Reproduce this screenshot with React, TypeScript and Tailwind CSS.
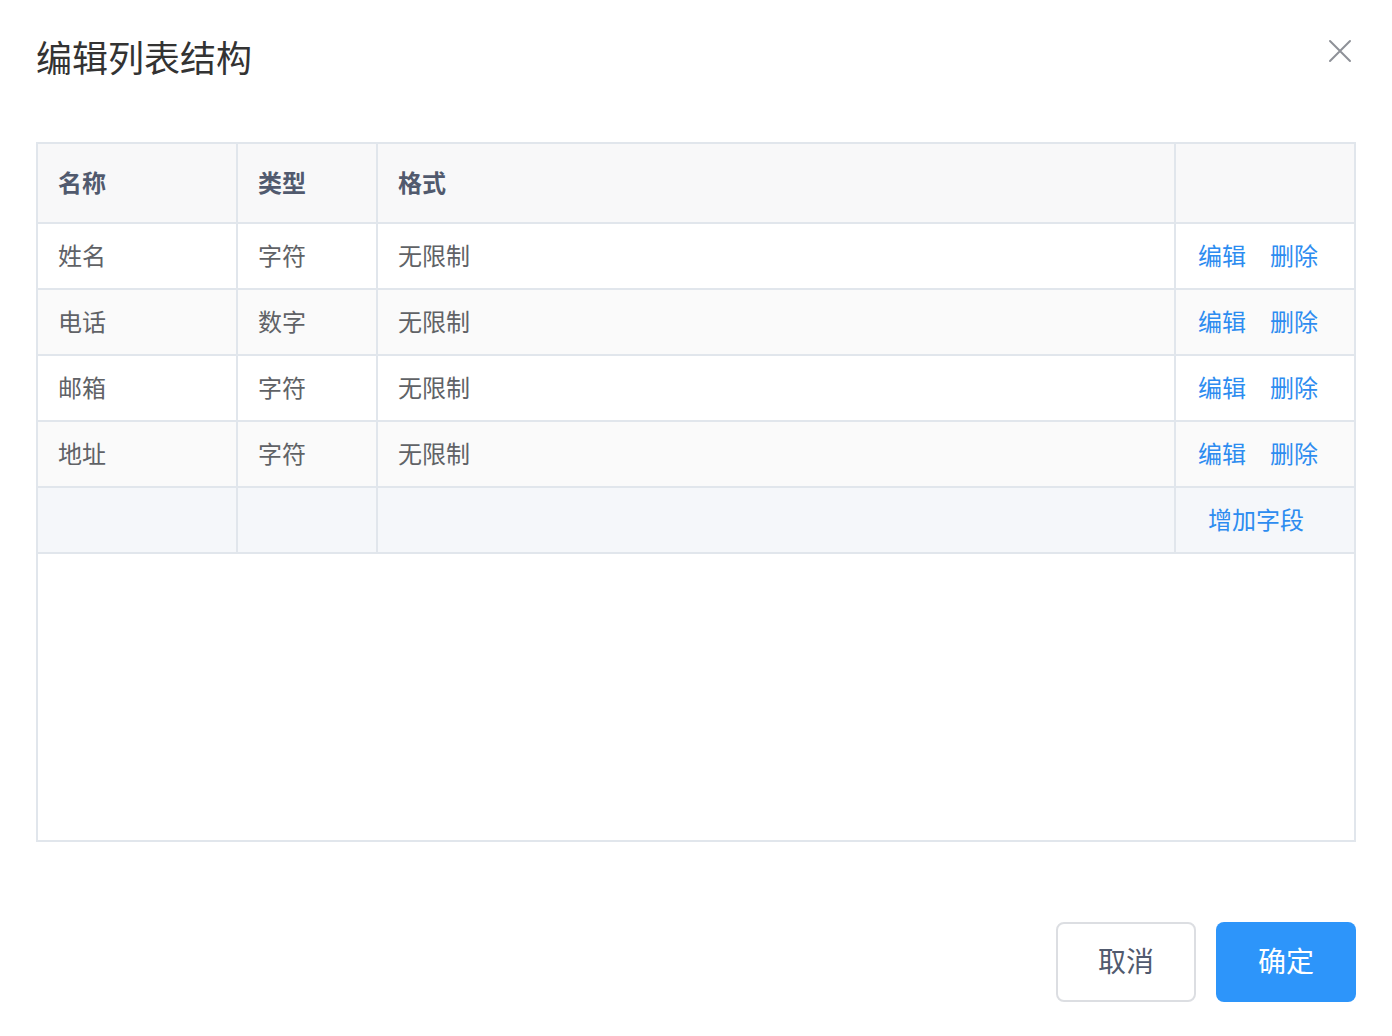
import React from "react";

type Field = {
  name: string;
  type: string;
  format: string;
};

const FIELDS: Field[] = [
  { name: "姓名", type: "字符", format: "无限制" },
  { name: "电话", type: "数字", format: "无限制" },
  { name: "邮箱", type: "字符", format: "无限制" },
  { name: "地址", type: "字符", format: "无限制" },
];

const cell = "flex items-center pl-5 pt-[2px] border-r-2 border-b-2 border-[#e1e6ec]";
const lastCell = "flex items-center justify-center pt-[2px] border-b-2 border-[#e1e6ec]";

const CloseIcon = () => (
  <svg width="24" height="24" viewBox="0 0 24 24" fill="none">
    <path d="M2 2L22 22M22 2L2 22" stroke="#8e9198" strokeWidth="2" strokeLinecap="round" />
  </svg>
);

export default function App() {
  return (
    <div
      className="w-[1392px] h-[1036px] bg-white px-9 pt-[33px]"
      style={{ fontFamily: '"Liberation Sans", "Noto Sans CJK SC", sans-serif' }}
    >
      {/* dialog header */}
      <div className="flex items-start justify-between">
        <h2 className="text-[36px] leading-[54px] text-[#333333]">编辑列表结构</h2>
        <button className="mt-[6px] mr-[4px]">
          <CloseIcon />
        </button>
      </div>

      {/* field table */}
      <div className="mt-[55px] h-[700px] border-2 border-[#e1e6ec]">
        <div className="grid grid-cols-[200px_140px_798px_1fr]">
          <div className={`${cell} h-[80px] bg-[#f8f8f9] text-[24px] font-semibold text-[#515a6e]`}>名称</div>
          <div className={`${cell} h-[80px] bg-[#f8f8f9] text-[24px] font-semibold text-[#515a6e]`}>类型</div>
          <div className={`${cell} h-[80px] bg-[#f8f8f9] text-[24px] font-semibold text-[#515a6e]`}>格式</div>
          <div className={`${lastCell} h-[80px] bg-[#f8f8f9]`}></div>

          {FIELDS.map((f, i) => {
            const bg = i % 2 === 1 ? "bg-[#fafafa]" : "bg-white";
            return (
              <React.Fragment key={f.name}>
                <div className={`${cell} ${bg} h-[66px] text-[24px] text-[#606266]`}>{f.name}</div>
                <div className={`${cell} ${bg} h-[66px] text-[24px] text-[#606266]`}>{f.type}</div>
                <div className={`${cell} ${bg} h-[66px] text-[24px] text-[#606266]`}>{f.format}</div>
                <div className={`${lastCell} ${bg} h-[66px] pr-[14px] gap-6 text-[24px] text-[#2d8cf0]`}>
                  <a className="cursor-pointer">编辑</a>
                  <a className="cursor-pointer">删除</a>
                </div>
              </React.Fragment>
            );
          })}

          <div className={`${cell} h-[66px] bg-[#f5f7fa]`}></div>
          <div className={`${cell} h-[66px] bg-[#f5f7fa]`}></div>
          <div className={`${cell} h-[66px] bg-[#f5f7fa]`}></div>
          <div className={`${lastCell} h-[66px] pr-[18px] bg-[#f5f7fa] text-[24px] text-[#2d8cf0]`}>
            <a className="cursor-pointer">增加字段</a>
          </div>
        </div>
      </div>

      {/* footer */}
      <div className="mt-[80px] flex justify-end gap-5">
        <button className="w-[140px] h-[80px] rounded-lg border-2 border-[#dcdee2] bg-white pt-[2px] text-[28px] text-[#515a6e]">
          取消
        </button>
        <button className="w-[140px] h-[80px] rounded-lg bg-[#2d95fa] pt-[2px] text-[28px] text-white">
          确定
        </button>
      </div>
    </div>
  );
}
